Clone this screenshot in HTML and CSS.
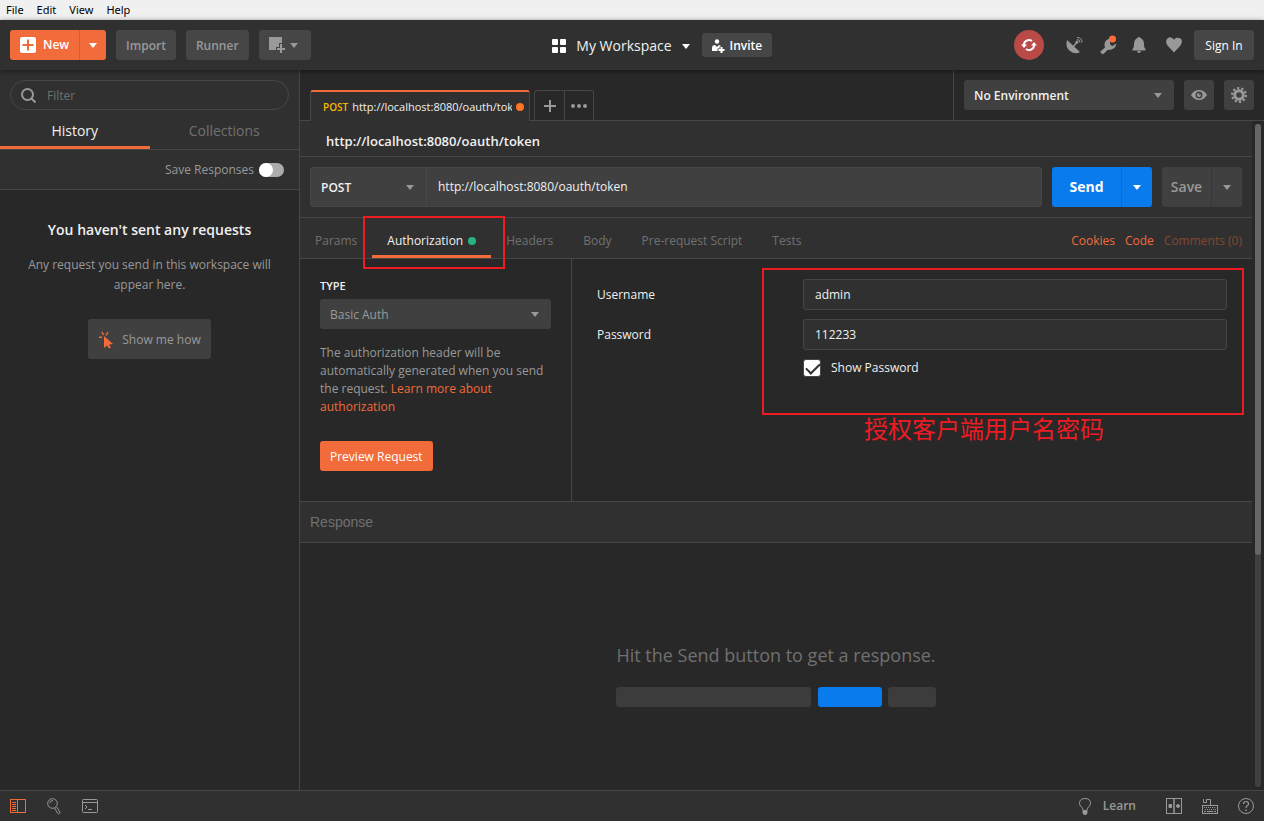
FILE: index.html
```
<!DOCTYPE html>
<html lang="en">
<head>
  <meta charset="UTF-8" />
  <meta name="viewport" content="width=device-width, initial-scale=1.0"/>
  <title>Postman</title>
  <link rel="stylesheet" href="styles.css">
</head>
<body>

  <nav class="menubar">
    <button>File</button>
    <button>Edit</button>
    <button>View</button>
    <button>Help</button>
  </nav>

  <header class="header">
    <div class="header-left">
      <div class="split orange">
        <button class="new-btn">
          <svg width="16" height="16" viewBox="0 0 16 16"><rect width="16" height="16" rx="2" fill="#fff"/><path d="M8 2.500v11M2.500 8h11" stroke="#f26b3a" stroke-width="2"/></svg>
          New
        </button>
        <button class="split-arrow" aria-label="More new options"><span class="caret"></span></button>
      </div>
      <button class="btn">Import</button>
      <button class="btn">Runner</button>
      <button class="btn window-btn" aria-label="New window">
        <svg width="17" height="17" viewBox="0 0 17 17"><path d="M0 0h13v6h-3v4H7v3H0z" fill="#999"/><path d="M12 7v9M8 12h8" stroke="#999" stroke-width="2"/></svg>
        <span class="caret"></span>
      </button>
    </div>

    <div class="header-center">
      <button class="workspace">
        <svg width="14" height="14" viewBox="0 0 14 14" fill="#fff"><rect width="6" height="6" rx="1"/><rect x="8" width="6" height="6" rx="1"/><rect y="8" width="6" height="6" rx="1"/><rect x="8" y="8" width="6" height="6" rx="1"/></svg>
        My Workspace
        <span class="caret"></span>
      </button>
      <button class="btn invite">
        <svg width="13" height="14" viewBox="0 0 13 14"><circle cx="5" cy="2.500" r="2.200" fill="#fff"/><path d="M0 12V9q0-3 3-3l2 2 2-2q1.500 0 2 1.500H7.500V9.500H5.500V12z" fill="#fff"/><path d="M9.500 8v6M6.500 11h6" stroke="#fff" stroke-width="2"/></svg>
        Invite
      </button>
    </div>

    <div class="header-right">
      <button class="sync" aria-label="Sync">
        <svg width="16" height="14" viewBox="0 0 16 14"><path d="M3 7.500a5 5 0 0 1 8-4.500M13 6.500a5 5 0 0 1-8 4.500" fill="none" stroke="#fff" stroke-width="2"/><path d="M0 6.500h6L3 10zM10 7.500h6L13 4z" fill="#fff"/></svg>
      </button>
      <button class="icon-btn" aria-label="Capture requests">
        <svg width="18" height="18" viewBox="0 0 18 18"><path d="M2 4Q0 11 5 15t10 1z" fill="#999"/><path d="M8 11l4-5" stroke="#999" stroke-width="1.500"/><circle cx="12" cy="6" r="1.500" fill="#999"/><path d="M12 3.500q3 0 3 3M12 1.500q5 0 5 5" fill="none" stroke="#999"/></svg>
      </button>
      <button class="icon-btn" aria-label="Settings">
        <svg width="18" height="20" viewBox="0 0 18 20"><path d="M11 3.500Q5 4 4.500 9q0 2.500.5 3.500l-4.500 4q0 2.500 3 2.500l4-4q8 .5 9-6.500l-4 2.500q-3-1-2.500-4z" fill="#999"/><circle cx="12.500" cy="4" r="3.500" fill="#ff6c37"/></svg>
      </button>
      <button class="icon-btn bell" aria-label="Notifications">
        <svg width="14" height="16" viewBox="0 0 14 16" fill="#999"><path d="M7 0q1 0 1.500 1Q12 2.500 12 7q0 4 1.500 5v1.500H.5V12Q2 11 2 7q0-4.500 3.500-6Q6 0 7 0zM5 14h4q-.5 2-2 2t-2-2z"/></svg>
      </button>
      <button class="icon-btn heart" aria-label="Favorites">
        <svg width="16" height="16" viewBox="0 0 16 16"><path d="M8 15.500L1.500 8.500Q-1 5 1 2t5-1q1.500.5 2 2 .5-1.500 2-2 3-1 5 1t-.5 6.500z" fill="#999"/></svg>
      </button>
      <button class="btn signin">Sign In</button>
    </div>
  </header>

  <div class="workarea">
    <aside class="sidebar">
      <label class="filter">
        <svg width="15" height="15" viewBox="0 0 15 15" fill="none" stroke="#999" stroke-width="2"><circle cx="6.500" cy="6.500" r="5.500"/><path d="M10.500 10.500l4 4"/></svg>
        <input type="text" placeholder="Filter" aria-label="Filter">
      </label>
      <div class="side-tabs">
        <button class="active">History</button>
        <button>Collections</button>
      </div>
      <div class="save-row">
        <label for="save-responses">Save Responses</label>
        <input type="checkbox" id="save-responses" class="toggle">
      </div>
      <div class="history-empty">
        <h2>You haven't sent any requests</h2>
        <p>Any request you send in this workspace will appear here.</p>
        <button class="show-btn">
          <svg width="16" height="18" viewBox="0 0 16 18"><path d="M6 5l9 8-4 .5 2 3-2 1-2-3-3 2.500z" fill="#f26b3a"/><path d="M1 6l3 .5M4 1l1.500 3M10 1L8 4.500" fill="none" stroke="#f26b3a" stroke-width="1.500"/></svg>
          Show me how
        </button>
      </div>
    </aside>

    <main class="main">
      <div class="tabbar">
        <div class="request-tabs">
          <button class="request-tab">
            <span class="method">POST</span>
            <span class="tab-name">http://localhost:8080/oauth/token</span>
            <span class="unsaved"></span>
          </button>
          <div class="tab-actions">
            <button aria-label="New tab"><svg width="12" height="12" viewBox="0 0 12 12"><path d="M6 0v12M0 6h12" stroke="#999" stroke-width="2"/></svg></button>
            <button aria-label="Tab options"><svg width="16" height="4" viewBox="0 0 16 4" fill="#999"><circle cx="2" cy="2" r="2"/><circle cx="8" cy="2" r="2"/><circle cx="14" cy="2" r="2"/></svg></button>
          </div>
        </div>
        <div class="environment">
          <div class="select env-select">
            <select aria-label="Environment"><option>No Environment</option></select>
            <span class="caret"></span>
          </div>
          <button class="square-btn" aria-label="Environment quick look">
            <svg width="16" height="10" viewBox="0 0 16 10"><path d="M0 5q3-5 8-5t8 5q-3 5-8 5T0 5z" fill="#999"/><circle cx="8" cy="5" r="3.500" fill="#404040"/><circle cx="8" cy="5" r="2" fill="#999"/><circle cx="9" cy="4" r="1" fill="#404040"/></svg>
          </button>
          <button class="square-btn" aria-label="Manage environments">
            <svg width="16" height="16" viewBox="0 0 16 16" fill="none" stroke="#999"><circle cx="8" cy="8" r="4.250" stroke-width="3"/><circle cx="8" cy="8" r="6.800" stroke-width="2.400" stroke-dasharray="2.200 2.072"/></svg>
          </button>
        </div>
      </div>

      <div class="content">
        <div class="builder">
          <h1 class="request-name">http://localhost:8080/oauth/token</h1>

          <div class="url-row">
            <div class="url-group">
              <div class="select method-select">
                <select aria-label="Method"><option>POST</option></select>
                <span class="caret"></span>
              </div>
              <input type="text" class="url-input" aria-label="Request URL" value="http://localhost:8080/oauth/token">
            </div>
            <div class="split send">
              <button>Send</button>
              <button class="split-arrow" aria-label="Send options"><span class="caret"></span></button>
            </div>
            <div class="split save">
              <button>Save</button>
              <button class="split-arrow" aria-label="Save options"><span class="caret"></span></button>
            </div>
          </div>

          <div class="option-tabs">
            <button>Params</button>
            <button class="active">Authorization <span class="dot"></span></button>
            <button>Headers</button>
            <button>Body</button>
            <button>Pre-request Script</button>
            <button>Tests</button>
            <div class="option-links">
              <a href="#">Cookies</a>
              <a href="#">Code</a>
              <a href="#" class="disabled">Comments (0)</a>
            </div>
          </div>

          <div class="auth">
            <section class="auth-type">
              <label for="auth-type">TYPE</label>
              <div class="select auth-select">
                <select id="auth-type"><option>Basic Auth</option></select>
                <span class="caret"></span>
              </div>
              <p>The authorization header will be automatically generated when you send the request. <a href="#">Learn more about authorization</a></p>
              <button class="preview-btn">Preview Request</button>
            </section>
            <section class="auth-form">
              <div class="field">
                <label for="username">Username</label>
                <input type="text" id="username" value="admin">
              </div>
              <div class="field">
                <label for="password">Password</label>
                <input type="text" id="password" value="112233">
              </div>
              <div class="show-password">
                <input type="checkbox" id="show-password" checked>
                <label for="show-password">Show Password</label>
              </div>
              <div class="mark-form"><span>授权客户端用户名密码</span></div>
            </section>
          </div>

          <div class="response-head">Response</div>
          <div class="response-empty">
            <p>Hit the Send button to get a response.</p>
            <div class="skeleton"><i class="bar-url"></i><i class="bar-send"></i><i class="bar-save"></i></div>
          </div>
        </div>
        <div class="scrollbar"><div class="track"><div class="thumb"></div></div></div>
      </div>
    </main>
  </div>

  <footer class="statusbar">
    <div class="status-left">
      <button aria-label="Toggle sidebar"><svg width="16" height="14" viewBox="0 0 16 14" fill="none" stroke="#f26b3a"><rect x=".5" y=".5" width="15" height="13"/><path d="M7.500 0v14M2 3.500h4M2 5.500h4M2 7.500h4M2 9.500h4M2 11.500h4"/></svg></button>
      <button aria-label="Find"><svg width="14" height="17" viewBox="0 0 14 17" fill="none" stroke="#999"><circle cx="5.500" cy="5.500" r="4.800"/><path d="M3 5q0-2.500 3-2.500M7.500 10l3 5q.7 1.200 1.800.6t.4-1.800l-3-4.800"/></svg></button>
      <button aria-label="Console"><svg width="16" height="14" viewBox="0 0 16 14" fill="none" stroke="#999"><rect x=".5" y=".5" width="15" height="13" rx="1"/><path d="M0 3.500h16M3 6l2 2-2 2M6 10.500h4"/></svg></button>
    </div>
    <div class="status-right">
      <button class="learn"><svg width="12" height="17" viewBox="0 0 12 17" fill="none" stroke="#999"><path d="M4 12.500Q4 10 2 8.500.5 7 .5 5.500q0-5 5.500-5t5.500 5q0 1.500-1.500 3-2 1.500-2 4z"/><path d="M4 13h4v2l-1 1.500H5L4 15z" fill="#999"/></svg> Learn</button>
      <button aria-label="Two pane view"><svg width="16" height="16" viewBox="0 0 16 16" fill="none" stroke="#999"><rect x=".5" y=".5" width="15" height="15"/><path d="M8 0v16" stroke-width="1.500"/><path d="M3 6.500h2.500v3H3z" fill="#999"/><circle cx="12" cy="8" r="1.500" fill="#999"/></svg></button>
      <button aria-label="Keyboard shortcuts"><svg width="16" height="16" viewBox="0 0 16 16" fill="none" stroke="#999"><rect x=".5" y="7.500" width="15" height="8"/><path d="M1.500 1v3.500h3v-3h4V7"/><path d="M2 9.500h12M3 11.500h11" stroke-dasharray="1 1"/><path d="M2 13.500h2M5 13.500h6M12 13.500h2"/></svg></button>
      <button aria-label="Help"><svg width="16" height="16" viewBox="0 0 16 16" fill="none" stroke="#999"><circle cx="8" cy="8" r="7.500"/><path d="M5.500 6q0-2.500 2.500-2.500T10.500 6q0 1-1.300 1.800T8 10" stroke-width="1.200"/><path d="M8 11.500v1.500" stroke-width="1.500"/></svg></button>
    </div>
  </footer>

</body>
</html>
```
FILE: styles.css
```
* {
  box-sizing: border-box;
}

body {
  margin: 0;
  height: 100vh;
  display: flex;
  flex-direction: column;
  overflow: hidden;
  background: #282828;
  color: #f0f0f0;
  font-family: "Open Sans", "Noto Sans CJK SC", sans-serif;
  font-size: 12px;
  line-height: 18px;
}

h1, h2, p {
  margin: 0;
}

button, input, select {
  margin: 0;
  padding: 0;
  border: none;
  background: none;
  color: inherit;
  font: inherit;
}

button {
  display: flex;
  align-items: center;
  justify-content: center;
  white-space: nowrap;
  cursor: pointer;
}

a {
  color: #f26b3a;
  text-decoration: none;
}

svg {
  display: block;
  flex: none;
}

.caret {
  width: 0;
  height: 0;
  border: 4px solid transparent;
  border-top: 5px solid #999;
  border-bottom: none;
}

/* Native menu */
.menubar {
  flex: none;
  height: 20px;
  padding-left: 6px;
  display: flex;
  gap: 13px;
  background: #f0f0f0;
  color: #000;
  font-family: "Noto Sans", sans-serif;
  font-size: 11px;
}

/* Top toolbar */
.header {
  flex: none;
  position: relative;
  z-index: 2;
  height: 50px;
  padding: 0 10px;
  display: flex;
  align-items: center;
  justify-content: space-between;
  background: #303030;
  box-shadow: 0 1px 5px rgba(0, 0, 0, 0.5);
}

.header-left, .header-center, .header-right {
  display: flex;
  align-items: center;
}

.header-left {
  gap: 10px;
}

.header-center {
  gap: 12px;
}

.btn {
  height: 30px;
  padding: 2px 10px 0;
  border-radius: 3px;
  background: #464646;
  color: #999;
  font-weight: 600;
}

.split {
  display: flex;
  border-radius: 3px;
  overflow: hidden;
}

.split-arrow {
  border-left: 1px solid rgba(0, 0, 0, 0.12);
}

.orange {
  height: 30px;
  background: #f26b3a;
  color: #fff;
  font-weight: 600;
}

.orange .split-arrow {
  width: 27px;
}

.orange .caret, .workspace .caret, .send .caret {
  border-top-color: #fff;
}

.new-btn {
  gap: 7px;
  padding: 0 10px;
}

.window-btn {
  gap: 4px;
  padding: 0 13px 0 10px;
}

.workspace {
  gap: 10px;
  padding-top: 2px;
  font-size: 14px;
  font-weight: 500;
}

.invite {
  height: 24px;
  gap: 5px;
  color: #fff;
}

.sync {
  width: 30px;
  height: 30px;
  margin-right: 15px;
  border-radius: 50%;
  background: #b94a48;
}

.icon-btn {
  width: 30px;
  height: 30px;
}

.icon-btn + .icon-btn {
  margin-left: 5px;
}

.icon-btn + .bell {
  margin-left: 0;
}

.signin {
  width: 60px;
  margin-left: 5px;
  color: #fff;
  font-weight: 500;
}

.workarea {
  flex: 1;
  min-height: 0;
  display: flex;
}

/* Sidebar */
.sidebar {
  flex: none;
  width: 300px;
  padding-top: 10px;
  border-right: 1px solid #464646;
  background: linear-gradient(#303030 120px, #282828 120px);
}

.filter {
  height: 30px;
  margin: 0 10px;
  padding: 0 10px;
  display: flex;
  align-items: center;
  gap: 11px;
  border: 1px solid #464646;
  border-radius: 15px;
}

.filter input {
  flex: 1;
  min-width: 0;
  padding-top: 2px;
  outline: none;
}

.filter input::placeholder {
  color: #707070;
  opacity: 1;
}

.side-tabs {
  height: 40px;
  display: flex;
  border-bottom: 1px solid #464646;
  font-size: 14px;
}

.side-tabs button {
  flex: 1;
  padding-top: 6px;
  border-bottom: 3px solid transparent;
  color: #707070;
}

.side-tabs .active {
  border-color: #f26b3a;
  color: #f0f0f0;
  font-weight: 500;
}

.save-row {
  height: 40px;
  padding-right: 15px;
  display: flex;
  align-items: center;
  justify-content: flex-end;
  gap: 5px;
  border-bottom: 1px solid #464646;
  color: #999;
}

.toggle {
  appearance: none;
  width: 25px;
  height: 14px;
  border-radius: 7px;
  background: #acacac;
}

.toggle::before {
  content: "";
  display: block;
  width: 14px;
  height: 14px;
  border-radius: 50%;
  background: #fff;
}

.history-empty {
  padding: 30px 20px;
  display: flex;
  flex-direction: column;
  align-items: center;
  text-align: center;
  color: #999;
  line-height: 20px;
}

.history-empty h2 {
  margin-bottom: 15px;
  color: #f0f0f0;
  font-size: 14px;
  font-weight: 600;
}

.show-btn {
  height: 40px;
  margin-top: 24px;
  padding: 2px 10px 0;
  gap: 8px;
  border-radius: 3px;
  background: #404040;
  color: #999;
}

/* Request tabs and environment */
.main {
  flex: 1;
  min-width: 0;
  display: flex;
  flex-direction: column;
}

.tabbar {
  flex: none;
  height: 51px;
  display: flex;
  border-bottom: 1px solid #464646;
}

.request-tabs {
  flex: 1;
  padding: 20px 0 0 10px;
  display: flex;
  gap: 4px;
}

.request-tab {
  width: 220px;
  height: 31px;
  padding: 0 5px 0 12px;
  gap: 4px;
  border: 1px solid #464646;
  border-top: 2px solid #f26b3a;
  border-bottom: none;
  border-radius: 3px 3px 0 0;
  background: #303030;
  font-size: 11px;
}

.method {
  color: #fbb500;
  font-size: 10px;
  font-weight: 600;
}

.tab-name {
  flex: 1;
  overflow: hidden;
  text-align: left;
}

.unsaved, .dot {
  flex: none;
  width: 8px;
  height: 8px;
  border-radius: 50%;
  background: #ff7526;
}

.tab-actions {
  height: 30px;
  display: flex;
  border: 1px solid #464646;
  border-bottom: none;
  border-radius: 3px 3px 0 0;
}

.tab-actions button {
  width: 29px;
}

.tab-actions button + button {
  border-left: 1px solid #464646;
}

.environment {
  padding: 10px;
  display: flex;
  gap: 10px;
  border-left: 1px solid #464646;
}

.select {
  display: grid;
  align-items: center;
  border-radius: 3px;
  background: #404040;
}

.select select {
  grid-area: 1 / 1;
  width: 100%;
  height: 100%;
  padding: 2px 10px 0;
  appearance: none;
}

.select .caret {
  grid-area: 1 / 1;
  justify-self: end;
  margin-right: 12px;
  pointer-events: none;
}

.env-select {
  width: 210px;
  height: 30px;
  font-weight: 600;
}

.square-btn {
  width: 30px;
  height: 30px;
  border-radius: 3px;
  background: #404040;
}

/* Request builder */
.content {
  flex: 1;
  min-height: 0;
  display: flex;
}

.builder {
  flex: 1;
  min-width: 0;
  display: flex;
  flex-direction: column;
}

.scrollbar {
  flex: none;
  width: 12px;
  padding: 3px;
}

.track {
  height: 100%;
  border-radius: 3px;
  background: #404040;
}

.thumb {
  height: 65%;
  border-radius: 3px;
  background: #666;
}

.request-name {
  height: 36px;
  padding: 0 26px;
  border-bottom: 1px solid #464646;
  background: #303030;
  font-size: 13px;
  font-weight: 600;
  line-height: 40px;
}

.url-row {
  padding: 10px;
  display: flex;
  gap: 10px;
  background: #303030;
}

.url-group {
  flex: 1;
  min-width: 0;
  height: 40px;
  display: flex;
  border: 1px solid #464646;
  border-radius: 3px;
  background: #404040;
}

.method-select {
  width: 116px;
  border-right: 1px solid #4a4a4a;
  font-weight: 600;
}

.url-input {
  flex: 1;
  min-width: 0;
  padding: 0 11px;
  outline: none;
}

.send, .save {
  height: 40px;
  font-size: 14px;
  font-weight: 600;
}

.split button:first-child {
  flex: 1;
}

.send {
  width: 100px;
  background: #097bed;
  color: #fff;
  font-weight: 700;
}

.save {
  width: 80px;
  background: #404040;
  color: #999;
}

.send .split-arrow, .save .split-arrow {
  width: 31px;
}

.option-tabs {
  height: 42px;
  display: flex;
  border-top: 1px solid #464646;
  border-bottom: 1px solid #464646;
  background: #303030;
}

.option-tabs > button {
  position: relative;
  padding: 9px 15px 0;
  gap: 5px;
  border-bottom: 3px solid transparent;
  color: #707070;
}

.option-tabs .active {
  border-color: #f26b3a;
  color: #f0f0f0;
  font-weight: 500;
}

.option-tabs .active::after {
  content: "";
  position: absolute;
  inset: -2px -14px -14px -9px;
  border: 2px solid #ed1c24;
  pointer-events: none;
}

.dot {
  background: #26b47f;
}

.option-links {
  margin-left: auto;
  padding: 6px 10px 0 0;
  display: flex;
  align-items: center;
  gap: 10px;
}

.option-links .disabled {
  opacity: 0.4;
}

/* Authorization */
.auth {
  height: 242px;
  display: flex;
}

.auth-type {
  flex: none;
  width: 272px;
  padding: 18px 20px;
  border-right: 1px solid #464646;
  color: #999;
}

.auth-type label {
  display: block;
  margin-bottom: 4px;
  color: #f0f0f0;
  font-size: 11px;
  font-weight: 600;
}

.auth-select {
  height: 30px;
}

.auth-type p {
  margin: 15px 0 25px;
}

.preview-btn {
  height: 30px;
  padding: 2px 10px 0;
  border-radius: 3px;
  background: #f26b3a;
  color: #fff;
  font-weight: 500;
}

.auth-form {
  position: relative;
  flex: 1;
  padding: 20px 25px;
  font-weight: 500;
}

.field {
  display: flex;
  align-items: center;
  margin-bottom: 9px;
}

.field label {
  flex: none;
  width: 206px;
}

.field input {
  flex: 1;
  min-width: 0;
  height: 31px;
  padding: 0 11px;
  border: 1px solid #464646;
  border-radius: 3px;
  background: #303030;
}

.show-password {
  padding-left: 206px;
  display: flex;
  align-items: center;
  gap: 10px;
}

.show-password input {
  appearance: none;
  position: relative;
  width: 18px;
  height: 18px;
  border: 1px solid #464646;
  border-radius: 3px;
  background: #fff;
}

.show-password input:checked::after {
  content: "";
  position: absolute;
  top: 3px;
  left: 2px;
  width: 12px;
  height: 6px;
  border: solid #303030;
  border-width: 0 0 2px 2px;
  transform: rotate(-45deg);
}

/* Red note over the form */
.mark-form {
  position: absolute;
  top: 9px;
  left: 190px;
  right: 8px;
  height: 147px;
  border: 2px solid #ed1c24;
  pointer-events: none;
}

.mark-form span {
  position: absolute;
  top: 100%;
  left: 100px;
  color: #ed1c24;
  font-family: "Noto Sans CJK SC", sans-serif;
  font-size: 24px;
  font-weight: 400;
  line-height: 30px;
  white-space: nowrap;
}

/* Response */
.response-head {
  height: 42px;
  padding-left: 10px;
  border-top: 1px solid #464646;
  border-bottom: 1px solid #464646;
  background: #303030;
  color: #707070;
  font-family: "Liberation Sans", sans-serif;
  font-size: 14px;
  line-height: 40px;
}

.response-empty {
  flex: 1;
  padding-top: 100px;
  display: flex;
  flex-direction: column;
  align-items: center;
  gap: 20px;
  color: #707070;
  font-size: 18px;
  line-height: 24px;
}

.skeleton {
  width: 320px;
  display: flex;
  justify-content: space-between;
}

.skeleton i {
  height: 20px;
  border-radius: 3px;
  background: #3c3c3c;
}

.skeleton .bar-url {
  width: 195px;
}

.skeleton .bar-send {
  width: 64px;
  background: #097bed;
}

.skeleton .bar-save {
  width: 48px;
}

/* Status bar */
.statusbar {
  flex: none;
  height: 31px;
  padding: 0 10px;
  display: flex;
  align-items: center;
  justify-content: space-between;
  border-top: 1px solid #464646;
  background: #303030;
  color: #999;
  font-weight: 600;
}

.status-left, .status-right {
  display: flex;
  align-items: center;
  gap: 20px;
}

.status-left {
  gap: 21px;
}

.status-right .learn {
  gap: 12px;
  margin-right: 10px;
}
```
